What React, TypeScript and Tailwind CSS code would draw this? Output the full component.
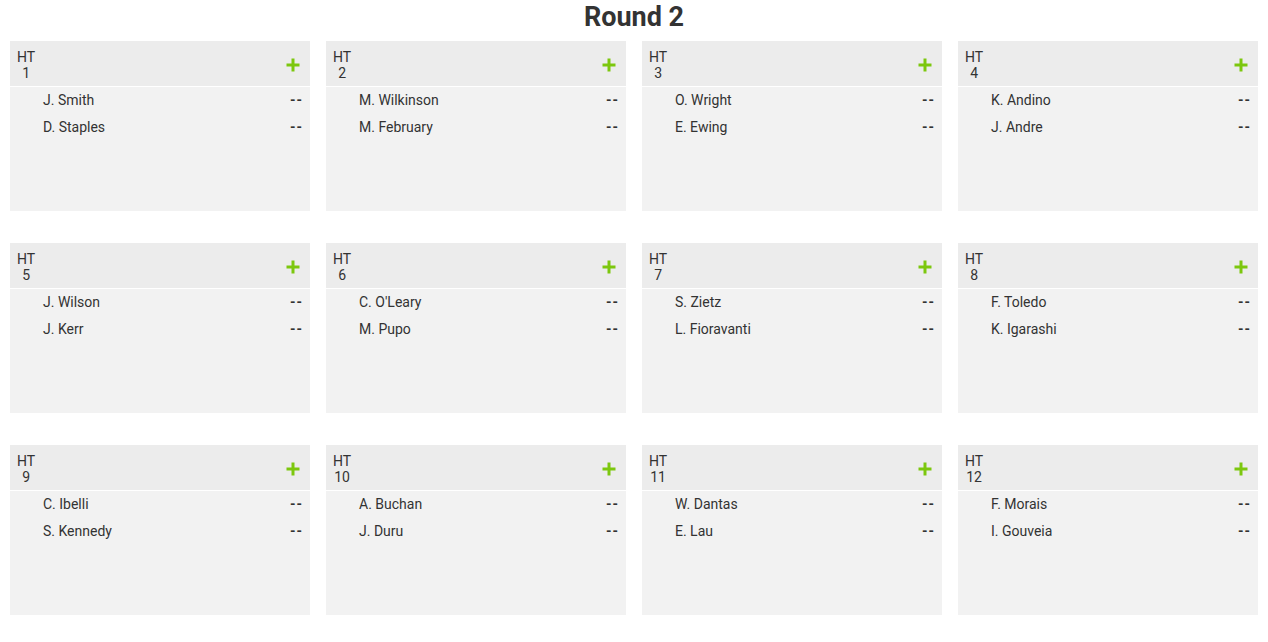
const heats = [
  ['J. Smith', 'D. Staples'],
  ['M. Wilkinson', 'M. February'],
  ['O. Wright', 'E. Ewing'],
  ['K. Andino', 'J. Andre'],
  ['J. Wilson', 'J. Kerr'],
  ["C. O'Leary", 'M. Pupo'],
  ['S. Zietz', 'L. Fioravanti'],
  ['F. Toledo', 'K. Igarashi'],
  ['C. Ibelli', 'S. Kennedy'],
  ['A. Buchan', 'J. Duru'],
  ['W. Dantas', 'E. Lau'],
  ['F. Morais', 'I. Gouveia'],
]

const PlusIcon = () => (
  <svg width="14" height="14" viewBox="0 0 14 14" className="mt-[2px] block">
    <path d="M7 0.5v13M0.5 7h13" stroke="#7cc70e" strokeWidth="3" />
  </svg>
)

const HeatCard = ({ num, surfers }: { num: number; surfers: string[] }) => (
  <div className="h-[170px] bg-[#f2f2f2]">
    <div className="flex h-[46px] items-center justify-between border-b border-white bg-[#ececec] pl-[7px] pr-[10px]">
      <div className="pt-[2px] text-center text-[14px] leading-[16px] text-[#333]">
        HT
        <br />
        {num}
      </div>
      <PlusIcon />
    </div>
    <div>
      {surfers.map(name => (
        <div
          key={name}
          className="flex h-[27px] items-center justify-between pl-[33px] pr-[8px] text-[14px] text-[#333]"
        >
          <span>{name}</span>
          <span className="flex gap-[1px] font-bold">
            <span>-</span>
            <span>-</span>
          </span>
        </div>
      ))}
    </div>
  </div>
)

export default function App() {
  return (
    <div
      className="min-h-screen bg-white px-[10px]"
      style={{ fontFamily: 'Roboto, "Liberation Sans", sans-serif' }}
    >
      <h1 className="flex h-[41px] items-center justify-center pb-[7px] text-[27px] font-bold text-[#333]">
        Round 2
      </h1>
      <div className="grid grid-cols-4 gap-x-[16px] gap-y-[32px]">
        {heats.map((surfers, i) => (
          <HeatCard key={i} num={i + 1} surfers={surfers} />
        ))}
      </div>
    </div>
  )
}
